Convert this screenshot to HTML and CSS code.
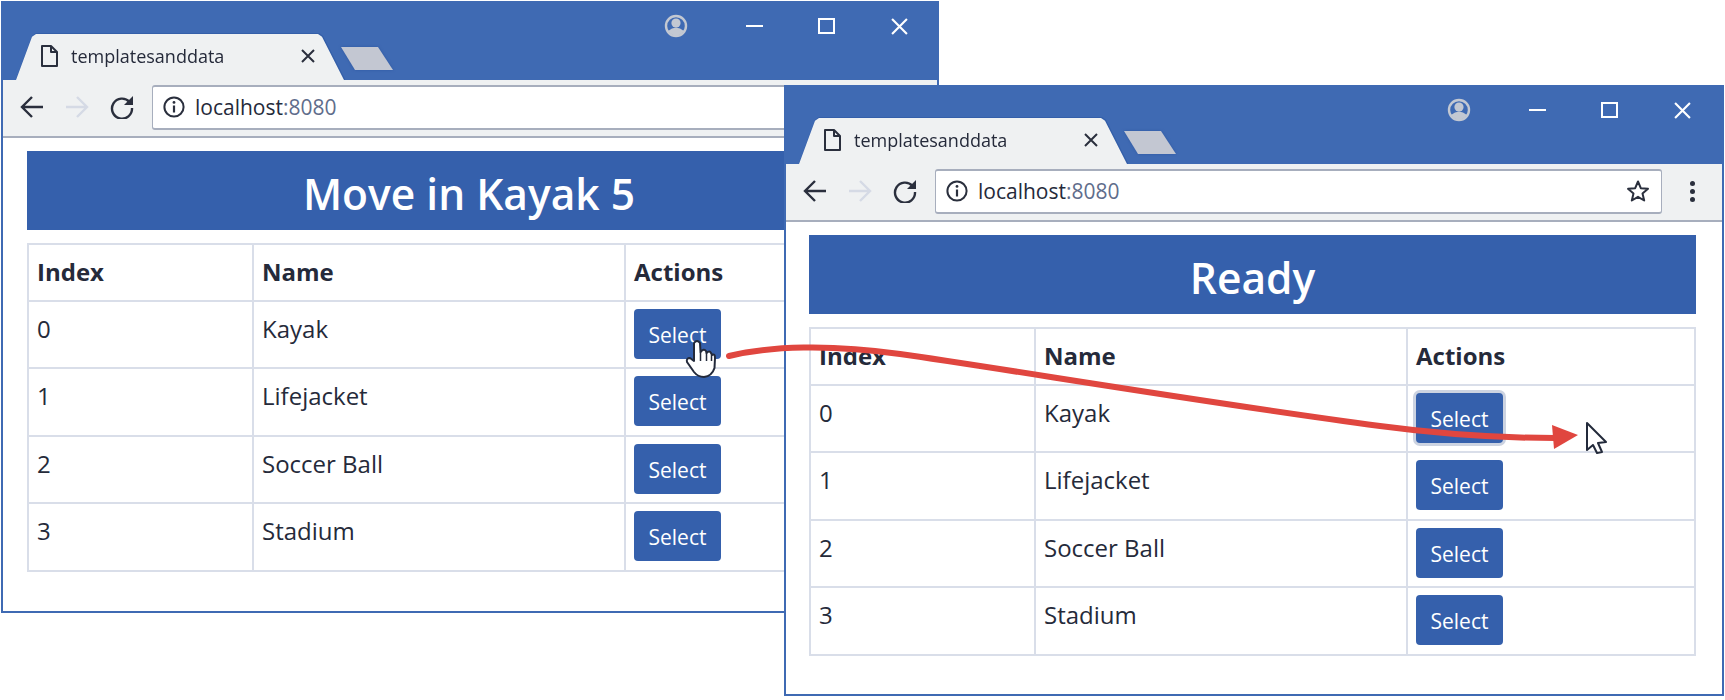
FILE: index.html
```html
<!DOCTYPE html>
<html lang="en">
  <head>
    <meta charset="UTF-8" />
    <meta name="viewport" content="width=device-width, initial-scale=1.0" />
    <title>templatesanddata</title>
    <link rel="stylesheet" href="styles.css">
  </head>
  <body>
    <svg class="defs" width="0" height="0">
      <symbol id="i-doc" viewBox="0 0 18 24"><path d="M2 2H11L17 8V22H2ZM11 2V8H17" fill="none" stroke="#2a2f3d" stroke-width="2" stroke-linejoin="round"/></symbol>
      <symbol id="i-x" viewBox="0 0 16 16"><path d="M2 2L14 14M14 2L2 14" fill="none" stroke="#2a2f3d" stroke-width="2"/></symbol>
      <symbol id="i-back" viewBox="0 0 24 24"><path d="M23 12H3M12 2L2 12L12 22" fill="none" stroke="currentColor" stroke-width="2.4"/></symbol>
      <symbol id="i-forward" viewBox="0 0 24 24"><path d="M1 12H21M12 2L22 12L12 22" fill="none" stroke="currentColor" stroke-width="2.4"/></symbol>
      <symbol id="i-reload" viewBox="0 0 24 24"><path d="M19.5 7A10 10 0 1 0 22 13" fill="none" stroke="currentColor" stroke-width="2.4"/><path d="M23 1V10H14Z" fill="currentColor"/></symbol>
      <symbol id="i-info" viewBox="0 0 22 22"><circle cx="11" cy="11" r="9.6" fill="none" stroke="#2a2f3d" stroke-width="2"/><path d="M11 9.5V16.5" stroke="#2a2f3d" stroke-width="2.2"/><circle cx="11" cy="6.4" r="1.4" fill="#2a2f3d"/></symbol>
      <symbol id="i-star" viewBox="0 0 24 24"><path d="M12 2.500L14.800 9.200L22 9.800L16.500 14.500L18.200 21.500L12 17.800L5.800 21.500L7.500 14.500L2 9.800L9.200 9.200Z" fill="#fff" stroke="#2a2f3d" stroke-width="2" stroke-linejoin="round"/></symbol>
      <symbol id="i-profile" viewBox="0 0 24 24"><circle cx="12" cy="12" r="10" fill="none" stroke="#c3c8d2" stroke-width="2.4"/><circle cx="12" cy="9" r="4.600" fill="#c3c8d2"/><path d="M4 17Q12 10 20 17Q12 26 4 17Z" fill="#c3c8d2"/></symbol>
    </svg>

    <div class="window window-back">
      <div class="titlebar">
        <div class="tab-outline">
          <div class="tab">
            <svg class="doc-icon"><use href="#i-doc"/></svg>
            <span class="tab-title">templatesanddata</span>
            <svg class="tab-close"><use href="#i-x"/></svg>
          </div>
        </div>
        <div class="new-tab"></div>
        <div class="controls">
          <svg class="profile"><use href="#i-profile"/></svg>
          <span class="minimize"></span>
          <span class="maximize"></span>
          <svg class="close" viewBox="0 0 16 16"><path d="M1 1L15 15M15 1L1 15"/></svg>
        </div>
      </div>
      <div class="toolbar">
        <svg class="nav"><use href="#i-back"/></svg>
        <svg class="nav off"><use href="#i-forward"/></svg>
        <svg class="nav"><use href="#i-reload"/></svg>
        <div class="omnibox">
          <svg class="info"><use href="#i-info"/></svg>
          <span class="url">localhost<span class="port">:8080</span></span>
          <svg class="star"><use href="#i-star"/></svg>
        </div>
        <div class="menu"><i></i><i></i><i></i></div>
      </div>
      <div class="page">
        <div class="banner">Move in Kayak 5</div>
        <table>
          <thead>
            <tr><th class="c-index">Index</th><th class="c-name">Name</th><th>Actions</th></tr>
          </thead>
          <tbody>
            <tr><td>0</td><td>Kayak</td><td><button>Select</button></td></tr>
            <tr><td>1</td><td>Lifejacket</td><td><button>Select</button></td></tr>
            <tr><td>2</td><td>Soccer Ball</td><td><button>Select</button></td></tr>
            <tr><td>3</td><td>Stadium</td><td><button>Select</button></td></tr>
          </tbody>
        </table>
      </div>
    </div>

    <div class="window window-front">
      <div class="titlebar">
        <div class="tab-outline">
          <div class="tab">
            <svg class="doc-icon"><use href="#i-doc"/></svg>
            <span class="tab-title">templatesanddata</span>
            <svg class="tab-close"><use href="#i-x"/></svg>
          </div>
        </div>
        <div class="new-tab"></div>
        <div class="controls">
          <svg class="profile"><use href="#i-profile"/></svg>
          <span class="minimize"></span>
          <span class="maximize"></span>
          <svg class="close" viewBox="0 0 16 16"><path d="M1 1L15 15M15 1L1 15"/></svg>
        </div>
      </div>
      <div class="toolbar">
        <svg class="nav"><use href="#i-back"/></svg>
        <svg class="nav off"><use href="#i-forward"/></svg>
        <svg class="nav"><use href="#i-reload"/></svg>
        <div class="omnibox">
          <svg class="info"><use href="#i-info"/></svg>
          <span class="url">localhost<span class="port">:8080</span></span>
          <svg class="star"><use href="#i-star"/></svg>
        </div>
        <div class="menu"><i></i><i></i><i></i></div>
      </div>
      <div class="page">
        <div class="banner">Ready</div>
        <table>
          <thead>
            <tr><th class="c-index">Index</th><th class="c-name">Name</th><th>Actions</th></tr>
          </thead>
          <tbody>
            <tr><td>0</td><td>Kayak</td><td><button class="focused">Select</button></td></tr>
            <tr><td>1</td><td>Lifejacket</td><td><button>Select</button></td></tr>
            <tr><td>2</td><td>Soccer Ball</td><td><button>Select</button></td></tr>
            <tr><td>3</td><td>Stadium</td><td><button>Select</button></td></tr>
          </tbody>
        </table>
      </div>
    </div>

    <svg class="overlay" viewBox="0 0 1725 700">
      <path class="drag-line" d="M729 356C770 346 830 344 900 354C1000 368 1200 402 1380 426C1440 434 1500 438 1555 438"/>
      <path class="drag-head" d="M1552 425L1578 435L1554 449Z"/>
      <path class="cursor" d="M694 343Q697 339 700 343L700.500 352Q704 348 706 351L706.500 353Q709.500 350 711 353L712 355Q715 353 715 358L714.500 368Q712 376 704 377Q698 377 694 372L687 362Q686 358 690 358L694 361Z"/>
      <path class="cursor-line" d="M700.500 352L700.500 361M706.500 353L706.500 361M711.500 355L711.500 361"/>
      <path class="cursor" d="M1587 423L1606 442L1598 443L1602 452L1597 453L1593 445L1587 450Z"/>
    </svg>
  </body>
</html>
```

FILE: styles.css
```css
body {
  margin: 0;
  background: #fff;
  color: #252a3a;
  font-family: "Open Sans", "Noto Sans", sans-serif;
}
.defs {
  position: absolute;
}
.window {
  position: absolute;
  display: flex;
  flex-direction: column;
  box-sizing: border-box;
  background: #fff;
  border: 2px solid #3f6ab3;
  overflow: hidden;
}
.window-back {
  left: 1px;
  top: 1px;
  width: 938px;
  height: 612px;
}
.window-front {
  left: 784px;
  top: 85px;
  width: 940px;
  height: 611px;
}
.titlebar {
  display: flex;
  align-items: flex-end;
  flex: none;
  height: 77px;
  padding-left: 9px;
  background: #3f6ab3;
}
.tab-outline {
  filter: drop-shadow(0 -1px 0 #345fa9) drop-shadow(1px 0 0 #345fa9);
}
.tab {
  display: flex;
  align-items: center;
  box-sizing: border-box;
  width: 332px;
  height: 46px;
  padding: 0 28px 2px 28px;
  background: #eff1f2;
  clip-path: polygon(0 100%, 4px 100%, 20px 6%, 24px 0, 306px 0, 310px 6%, 332px 100%);
}
.doc-icon {
  flex: none;
  width: 18px;
  height: 24px;
}
.tab-title {
  margin-left: 13px;
  font-size: 18px;
  white-space: nowrap;
}
.tab-close {
  flex: none;
  width: 16px;
  height: 16px;
  margin-left: auto;
}
.new-tab {
  align-self: flex-end;
  width: 52px;
  height: 23px;
  margin: 0 0 10px -3px;
  filter: drop-shadow(0 0 1.500px #2f58a2);
}
.new-tab::before {
  content: "";
  display: block;
  height: 100%;
  background: #c3c7d2;
  clip-path: polygon(0 0, 37px 0, 52px 100%, 14px 100%);
}
.controls {
  display: flex;
  align-items: center;
  align-self: flex-start;
  margin-left: auto;
  height: 46px;
  padding-right: 31px;
}
.window-back .controls {
  padding-right: 29px;
}
.profile {
  width: 24px;
  height: 24px;
}
.minimize {
  width: 17px;
  height: 2px;
  margin-left: 58px;
  background: #fff;
}
.maximize {
  box-sizing: border-box;
  width: 17px;
  height: 16px;
  margin-left: 55px;
  border: 2px solid #fff;
}
.close {
  width: 17px;
  height: 17px;
  margin-left: 56px;
}
.close path {
  fill: none;
  stroke: #fff;
  stroke-width: 2;
}
.toolbar {
  display: flex;
  align-items: center;
  flex: none;
  box-sizing: border-box;
  height: 58px;
  padding: 0 27px 2px 17px;
  background: #eff1f2;
  border-bottom: 2px solid #a7aebd;
}
.nav {
  flex: none;
  width: 24px;
  height: 24px;
  margin-right: 21px;
  color: #2a2f3d;
}
.nav.off {
  color: #d5dae5;
}
.omnibox {
  display: flex;
  align-items: center;
  flex: 1;
  box-sizing: border-box;
  height: 45px;
  margin: 0 28px 0 -3px;
  padding: 0 11px 0 10px;
  background: #fff;
  border: 1px solid #a7aebd;
  border-top-width: 2px;
  border-bottom-width: 2px;
  border-radius: 3px;
}
.info {
  flex: none;
  width: 22px;
  height: 22px;
}
.url {
  margin-left: 10px;
  font-size: 21px;
}
.port {
  color: #5f6d8c;
}
.star {
  width: 24px;
  height: 24px;
  margin-left: auto;
}
.menu {
  display: flex;
  flex-direction: column;
  gap: 3px;
}
.menu i {
  width: 5px;
  height: 5px;
  border-radius: 50%;
  background: #2a2f3d;
}
.page {
  padding: 13px 26px 0 23px;
}
.window-back .page {
  padding-left: 24px;
}
.banner {
  box-sizing: border-box;
  height: 79px;
  padding-top: 3px;
  background: #3560ac;
  color: #fff;
  font-size: 42.500px;
  font-weight: 600;
  line-height: 79px;
  text-align: center;
}
table {
  width: 100%;
  margin-top: 13px;
  border-collapse: collapse;
  font-size: 24px;
  table-layout: fixed;
}
th,
td {
  box-sizing: border-box;
  padding: 7px 8px 7px;
  border: 2px solid #d9dee9;
  text-align: left;
  vertical-align: top;
}
th {
  height: 57px;
  font-size: 24px;
  font-weight: 700;
  line-height: 40px;
}
td {
  height: 67.400px;
  line-height: 40px;
}
.c-index {
  width: 225px;
}
.c-name {
  width: 372px;
}
button {
  display: block;
  width: 87px;
  height: 50px;
  padding: 2px 0 0;
  background: #3560ac;
  color: #fff;
  border: none;
  border-radius: 4px;
  font-family: inherit;
  font-size: 21px;
}
button.focused {
  box-shadow: 0 0 0 3px #ccd3e1;
}
.overlay {
  position: absolute;
  left: 0;
  top: 0;
  width: 1725px;
  height: 700px;
  pointer-events: none;
}
.drag-line {
  fill: none;
  stroke: #e0463f;
  stroke-width: 6;
  stroke-linecap: round;
}
.drag-head {
  fill: #e0463f;
}
.cursor {
  fill: #fff;
  stroke: #232a3b;
  stroke-width: 2;
  stroke-linejoin: round;
}
.cursor-line {
  fill: none;
  stroke: #232a3b;
  stroke-width: 1.500;
}
```
